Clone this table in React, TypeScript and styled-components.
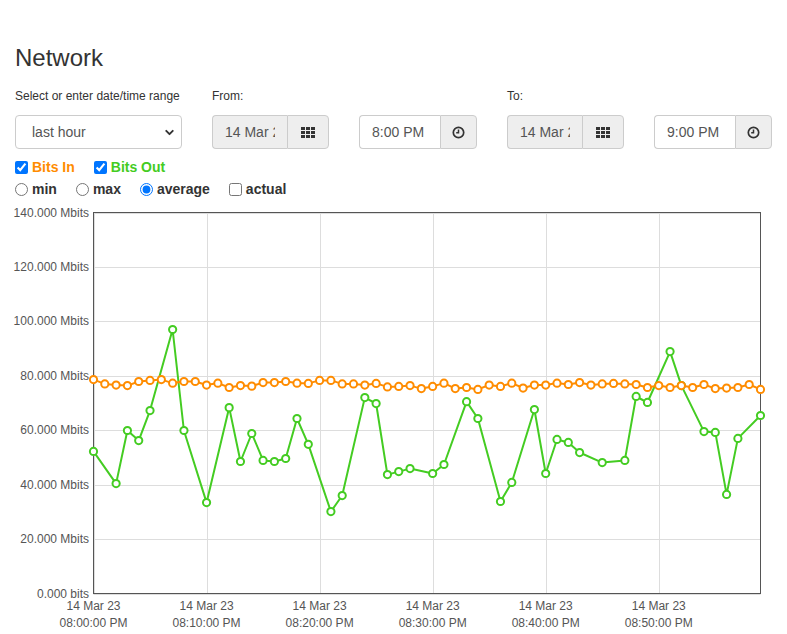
import React from "react";
import styled, { createGlobalStyle } from "styled-components";
import { ChevronDown } from "lucide-react";

const GlobalStyle = createGlobalStyle`
  body {
    margin: 0;
    background: #fff;
    font-family: "Liberation Sans", Arial, sans-serif;
    color: #333;
  }
`;

const Page = styled.div`
  padding: 0 15px;
  width: 787px;
  height: 634px;
  overflow: hidden;
  box-sizing: border-box;
`;

const Title = styled.h3`
  margin: 0;
  padding-top: 44px;
  font-size: 24px;
  line-height: 28px;
  font-weight: 500;
  color: #333;
`;

const Controls = styled.div`
  display: grid;
  grid-template-columns: 167px 117px 118px 117px 118px;
  column-gap: 30px;
  margin-top: 16px;
`;

const Field = styled.div`
  display: flex;
  flex-direction: column;
`;

const Label = styled.label`
  font-size: 12px;
  line-height: 16px;
  height: 16px;
  margin-bottom: 11px;
  color: #333;
`;

const SelectWrap = styled.div`
  position: relative;
  width: 167px;
`;

const Select = styled.select`
  appearance: none;
  width: 100%;
  height: 34px;
  box-sizing: border-box;
  padding: 0 30px 0 16px;
  font-family: inherit;
  font-size: 14px;
  color: #555;
  background: #fff;
  border: 1px solid #ccc;
  border-radius: 4px;
  outline: none;
`;

const Chevron = styled(ChevronDown)`
  position: absolute;
  right: 6px;
  top: 11px;
  pointer-events: none;
  color: #333;
`;

const Group = styled.div`
  display: flex;
  height: 34px;
`;

const Input = styled.input<{ $width: number; $grey?: boolean }>`
  width: ${(p) => p.$width}px;
  height: 34px;
  box-sizing: border-box;
  padding: 6px 12px;
  font-family: inherit;
  font-size: 14px;
  color: #555;
  background: ${(p) => (p.$grey ? "#eee" : "#fff")};
  border: 1px solid #ccc;
  border-right: none;
  border-radius: 4px 0 0 4px;
  outline: none;
`;

const Addon = styled.span<{ $width: number }>`
  display: flex;
  align-items: center;
  justify-content: center;
  width: ${(p) => p.$width}px;
  box-sizing: border-box;
  background: #eee;
  border: 1px solid #ccc;
  border-radius: 0 4px 4px 0;
  color: #555;
`;

const OptionRow = styled.div<{ $top: number }>`
  display: flex;
  align-items: center;
  height: 22px;
  margin-top: ${(p) => p.$top}px;
`;

const Option = styled.label<{ $color?: string }>`
  display: flex;
  align-items: center;
  margin-right: 19px;
  font-size: 14px;
  font-weight: bold;
  color: ${(p) => p.$color || "#333"};

  input {
    margin: 0 4px 0 0;
    width: 13px;
    height: 13px;
  }
`;

const ChartWrap = styled.div`
  margin: -1px -15px 0;

  svg {
    display: block;
  }
`;

const ORANGE = "#ff8c00";
const GREEN = "#44cc22";

const bitsIn = [
  78.6, 77.0, 76.6, 76.4, 77.9, 78.3, 78.6, 77.3, 77.9, 77.9, 76.6, 77.3, 75.7, 76.4, 76.2,
  77.5, 77.5, 77.9, 77.3, 77.2, 78.3, 78.3, 77.0, 77.0, 76.6, 77.2, 75.9, 76.1, 76.4, 75.3,
  76.1, 77.3, 75.3, 75.7, 75.0, 76.6, 76.1, 77.3, 75.5, 76.6, 76.6, 77.3, 76.8, 77.5, 76.6,
  77.0, 77.2, 77.0, 76.8, 75.7, 76.4, 75.7, 76.4, 75.7, 76.8, 75.3, 75.5, 75.7, 76.8, 75.0,
];

// [minute index, Mbits]
const bitsOut: [number, number][] = [
  [0, 52.2], [2, 40.4], [3, 59.9], [4, 56.2], [5, 67.2], [7, 97.0], [8, 59.9], [10, 33.4],
  [12, 68.3], [13, 48.5], [14, 58.8], [15, 48.9], [16, 48.5], [17, 49.6], [18, 64.3],
  [19, 54.8], [21, 30.1], [22, 36.0], [24, 72.0], [25, 69.8], [26, 43.7], [27, 44.8],
  [28, 45.9], [30, 44.1], [31, 47.4], [33, 70.5], [34, 64.3], [36, 33.8], [37, 40.8],
  [39, 67.6], [40, 44.1], [41, 56.6], [42, 55.5], [43, 51.8], [45, 48.1], [47, 48.9],
  [48, 72.4], [49, 70.2], [51, 88.9], [52, 76.4], [54, 59.5], [55, 59.2], [56, 36.4],
  [57, 57.0], [59, 65.4],
];

const LEFT = 93.5;
const RIGHT = 760.5;
const TOP = 13.5;
const BOTTOM = 394.5;
const STEP = (RIGHT - LEFT) / 59;

const xOf = (i: number) => LEFT + i * STEP;
const yOf = (v: number) => BOTTOM - (v / 140) * (BOTTOM - TOP);

const yTicks = [0, 20, 40, 60, 80, 100, 120, 140];
const xTicks = ["08:00:00 PM", "08:10:00 PM", "08:20:00 PM", "08:30:00 PM", "08:40:00 PM", "08:50:00 PM"];

function Series({ points, color }: { points: [number, number][]; color: string }) {
  const d = points.map(([x, y], i) => `${i ? "L" : "M"}${x.toFixed(1)},${y.toFixed(1)}`).join(" ");
  return (
    <g>
      <path d={d} fill="none" stroke={color} strokeWidth={2} strokeLinejoin="round" />
      {points.map(([x, y], i) => (
        <circle key={i} cx={x} cy={y} r={3.6} fill="#fff" stroke={color} strokeWidth={2} />
      ))}
    </g>
  );
}

function Chart() {
  const inPts: [number, number][] = bitsIn.map((v, i) => [xOf(i), yOf(v)]);
  const outPts: [number, number][] = bitsOut.map(([i, v]) => [xOf(i), yOf(v)]);
  return (
    <svg width={787} height={434} viewBox="0 0 787 434" fontFamily="Liberation Sans, Arial, sans-serif">
      {yTicks.map((t) => (
        <g key={t}>
          <line x1={LEFT} x2={RIGHT} y1={Math.round(yOf(t)) + 0.5} y2={Math.round(yOf(t)) + 0.5} stroke="#ddd" />
          <text x={89} y={yOf(t) + 4} textAnchor="end" fontSize={12} fill="#555">
            {t === 0 ? "0.000 bits" : `${t}.000 Mbits`}
          </text>
        </g>
      ))}
      {xTicks.map((t, i) => {
        const x = xOf(i * 10);
        return (
          <g key={t}>
            <line x1={Math.round(x) + 0.5} x2={Math.round(x) + 0.5} y1={TOP} y2={BOTTOM} stroke="#ddd" />
            <text x={x} y={411} textAnchor="middle" fontSize={12} fill="#555">14 Mar 23</text>
            <text x={x} y={428} textAnchor="middle" fontSize={12} fill="#555">{t}</text>
          </g>
        );
      })}
      <rect x={LEFT} y={TOP} width={RIGHT - LEFT} height={BOTTOM - TOP} fill="none" stroke="#555" />
      <Series points={outPts} color={GREEN} />
      <Series points={inPts} color={ORANGE} />
    </svg>
  );
}

const GridIcon = () => (
  <svg width={14} height={11} viewBox="0 0 14 11">
    {[0, 1, 2].map((r) =>
      [0, 1, 2].map((c) => <rect key={`${r}${c}`} x={c * 5} y={r * 4} width={4} height={3} fill="#333" />)
    )}
  </svg>
);

const ClockIcon = () => (
  <svg width={13} height={13} viewBox="0 0 13 13">
    <circle cx={6.5} cy={6.5} r={5.2} fill="none" stroke="#333" strokeWidth={1.7} />
    <path d="M6.5 3.4 V6.8 H4.2" fill="none" stroke="#333" strokeWidth={1.5} />
  </svg>
);

export default function App() {
  return (
    <>
      <GlobalStyle />
      <Page>
        <Title>Network</Title>
        <Controls>
          <Field>
            <Label>Select or enter date/time range</Label>
            <SelectWrap>
              <Select defaultValue="hour">
                <option value="hour">last hour</option>
                <option value="day">last day</option>
                <option value="week">last week</option>
              </Select>
              <Chevron size={13} strokeWidth={3.5} />
            </SelectWrap>
          </Field>
          <Field>
            <Label>From:</Label>
            <Group>
              <Input $width={75} $grey readOnly defaultValue="14 Mar 2023" />
              <Addon $width={42}><GridIcon /></Addon>
            </Group>
          </Field>
          <Field>
            <Label />
            <Group>
              <Input $width={81} defaultValue="8:00 PM" />
              <Addon $width={37}><ClockIcon /></Addon>
            </Group>
          </Field>
          <Field>
            <Label>To:</Label>
            <Group>
              <Input $width={75} $grey readOnly defaultValue="14 Mar 2023" />
              <Addon $width={42}><GridIcon /></Addon>
            </Group>
          </Field>
          <Field>
            <Label />
            <Group>
              <Input $width={81} defaultValue="9:00 PM" />
              <Addon $width={37}><ClockIcon /></Addon>
            </Group>
          </Field>
        </Controls>
        <OptionRow $top={7}>
          <Option $color={ORANGE}><input type="checkbox" defaultChecked />Bits In</Option>
          <Option $color={GREEN}><input type="checkbox" defaultChecked />Bits Out</Option>
        </OptionRow>
        <OptionRow $top={0}>
          <Option><input type="radio" name="agg" />min</Option>
          <Option><input type="radio" name="agg" />max</Option>
          <Option><input type="radio" name="agg" defaultChecked />average</Option>
          <Option><input type="checkbox" />actual</Option>
        </OptionRow>
        <ChartWrap>
          <Chart />
        </ChartWrap>
      </Page>
    </>
  );
}
